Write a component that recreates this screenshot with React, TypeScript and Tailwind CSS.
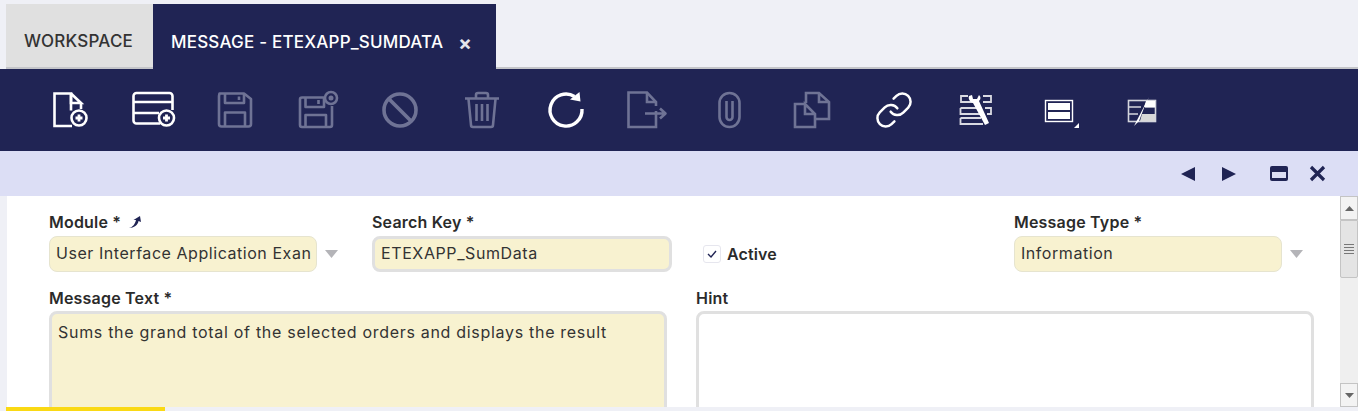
const white = "#ffffff";
const dim = "#6f7395";

function Svg({ children, color }: { children: React.ReactNode; color: string }) {
  return (
    <svg
      width="40"
      height="40"
      viewBox="0 0 40 40"
      fill="none"
      stroke={color}
      strokeWidth="2.6"
      strokeLinejoin="round"
      className="overflow-visible"
    >
      {children}
    </svg>
  );
}

function Plus({ cx, cy, r = 7.5 }: { cx: number; cy: number; r?: number }) {
  return (
    <>
      <circle cx={cx} cy={cy} r={r} />
      <path d={`M${cx - 3.5} ${cy}h7M${cx} ${cy - 3.5}v7`} strokeWidth="2.8" />
    </>
  );
}

const tools: { color: string; draw: React.ReactNode }[] = [
  {
    color: white,
    draw: (
      <>
        <path d="M21 20.5V3.5H4.5V36H22" strokeLinejoin="miter" />
        <path d="M21 3.5V13H31L21 3.5L31 13V19" strokeLinejoin="miter" />
        <Plus cx={29} cy={28} />
      </>
    ),
  },
  {
    color: white,
    draw: (
      <>
        <path d="M27 33.5H3.5a3 3 0 0 1-3-3V6a3 3 0 0 1 3-3h33a3 3 0 0 1 3 3v14" />
        <path d="M1 12H39M1 23H26" />
        <Plus cx={33.5} cy={28} />
      </>
    ),
  },
  {
    color: dim,
    draw: (
      <>
        <path d="M4.5 3.5H29L36 9V34a2.5 2.5 0 0 1-2.500 2.500H6.500a2.500 2.500 0 0 1-2.500-2.500V6z" />
        <path d="M10 3.500V13H29V3.500M24 6.500V10M10 36V22.500H30V36" />
      </>
    ),
  },
  {
    color: dim,
    draw: (
      <>
        <path d="M27 7.500H5a2 2 0 0 0-2 2V35a2 2 0 0 0 2 2H33a2 2 0 0 0 2-2V16" />
        <path d="M8.500 7.500V17H27V7.500M21.500 10V14M8.500 37V25H29V37" />
        <circle cx={34} cy={8} r={6} />
        <circle cx={34} cy={8} r={1.2} />
      </>
    ),
  },
  {
    color: dim,
    draw: (
      <>
        <circle cx={20} cy={20} r={16} strokeWidth="3.6" />
        <path d="M9 9L31 31" strokeWidth="3.8" />
      </>
    ),
  },
  {
    color: dim,
    draw: (
      <>
        <path d="M3 8.500H37M14 8V5a2 2 0 0 1 2-2h8a2 2 0 0 1 2 2v3" />
        <path d="M6.500 9L9 35a2 2 0 0 0 2 2H29a2 2 0 0 0 2-2L33.500 9" />
        <path d="M14.500 14V31M20 14V31M25.500 14V31" />
      </>
    ),
  },
  {
    color: white,
    draw: (
      <>
        <path d="M29.500 6.500A16 16 0 1 0 37 19" strokeWidth="3.4" />
        <path d="M25 9.500L35.500 11.500L34.500 2z" fill={white} stroke="none" />
      </>
    ),
  },
  {
    color: dim,
    draw: (
      <>
        <path d="M29 21V37H1.500V2.500H20L29 12V16" strokeLinejoin="miter" />
        <path d="M20 3V12H29" strokeLinejoin="miter" />
        <path d="M18 23.500H38M33 18.500L38.500 23.500L33 28.500" />
      </>
    ),
  },
  {
    color: dim,
    draw: (
      <>
        <rect x={10.500} y={3} width={20} height={34} rx={10} />
        <path d="M17.500 11V27a3 3 0 0 0 6 0V11" />
      </>
    ),
  },
  {
    color: dim,
    draw: (
      <>
        <path d="M13 14H3V37H23V24L13 14V24H23" strokeLinejoin="miter" />
        <path d="M14 13V3H27L37 12V29H23M27 3V12H37" strokeLinejoin="miter" />
      </>
    ),
  },
  {
    color: white,
    draw: (
      <g transform="scale(1.667)" strokeWidth="1.500" strokeLinecap="round">
        <path d="M10 13a5 5 0 0 0 7.540.540l3-3a5 5 0 0 0-7.070-7.070l-1.720 1.710" />
        <path d="M14 11a5 5 0 0 0-7.540-.540l-3 3a5 5 0 0 0 7.070 7.070l1.710-1.710" />
      </g>
    ),
  },
  {
    color: "#d9dae2",
    draw: (
      <>
        <path d="M12 6H5V12H17M27 6H35V12H27M4.500 18H22M4.500 18V24H24M29 18H35V24H31M4.500 28V34H27M4.500 28H25" strokeWidth="1.800" strokeLinejoin="miter" />
        <path d="M13 6C12 9 14 12 17 13L29 35L33 33L23 11C25 9 25 7 23 5L21 9L17 9L16 5z" fill={white} stroke="none" />
      </>
    ),
  },
  {
    color: white,
    draw: (
      <>
        <rect x={6.500} y={10.500} width={27} height={21} strokeWidth="1.400" strokeLinejoin="miter" />
        <rect x={9} y={13} width={22} height={7} fill={white} stroke="none" />
        <rect x={9} y={22} width={22} height={7} fill={white} stroke="none" />
        <path d="M35 38H40V33z" fill={white} stroke="none" />
      </>
    ),
  },
  {
    color: "#d4d5dd",
    draw: (
      <>
        <rect x={7.500} y={10.500} width={27} height={21} strokeWidth="1.600" strokeLinejoin="miter" />
        <path d="M7.500 17H20M7.500 24H17M24 17H34" strokeWidth="1.600" />
        <path d="M25 11H34V17H23z" fill={white} stroke="none" />
        <path d="M21 24H34V31H19z" fill="#d8d8d8" stroke="none" />
        <path d="M28 7L13 36L18 31L23 18z" fill={white} stroke="none" />
      </>
    ),
  },
];

function Caret() {
  return (
    <svg width="13" height="8" viewBox="0 0 13 8" className="shrink-0">
      <path d="M0 0H13L6.500 8z" fill="#b4b4b8" />
    </svg>
  );
}

function Label({ children }: { children: React.ReactNode }) {
  return <div className="text-[16px] leading-[18px] font-semibold tracking-[0.2px] text-[#2b2b2b]">{children}</div>;
}

function Pick({ children }: { children: React.ReactNode }) {
  return (
    <div className="flex items-center">
      <div className="h-9 w-[268px] overflow-hidden whitespace-nowrap rounded-lg border border-[#e6e4cf] bg-[#f8f2d0] px-[6px] text-[16px] leading-[32px] tracking-[0.55px] text-[#333333]">
        {children}
      </div>
      <div className="ml-[8px]">
        <Caret />
      </div>
    </div>
  );
}

function ScrollBtn({ down }: { down?: boolean }) {
  return (
    <div className="flex h-[24px] items-center justify-center border border-[#c4c4c4] bg-[#f3f3f3]">
      <svg width="9" height="5" viewBox="0 0 9 5">
        <path d={down ? "M0 0H9L4.500 5z" : "M0 5H9L4.500 0z"} fill="#666666" />
      </svg>
    </div>
  );
}

export default function App() {
  return (
    <div className="flex h-[411px] w-full flex-col overflow-hidden bg-[#eff0f6] font-['Inter','Liberation_Sans',sans-serif]">
      {/* Tabs */}
      <div className="flex h-[69px] shrink-0 items-stretch pl-[6px] pt-1">
        <div className="flex w-[147px] items-center border-b-2 border-[#c4c5c9] bg-[#e0e0e0] pl-[18px] pt-[12px] text-[17px] font-medium tracking-[0.2px] text-[#333333]">
          WORKSPACE
        </div>
        <div className="flex w-[343px] items-center bg-[#202454] pl-[18px] pt-[12px] text-[17px] font-medium tracking-[0.2px] text-white">
          MESSAGE - ETEXAPP_SUMDATA
          <span className="ml-[15px] text-[20px] font-bold leading-none text-[#e4e5ec]">×</span>
        </div>
        <div className="flex-1 border-b-2 border-[#c4c5c9]" />
      </div>

      {/* Toolbar */}
      <div className="flex h-[82px] shrink-0 items-center bg-[#202454] pl-[29px]">
        {tools.map((t, i) => (
          <div key={i} className="flex h-10 w-[82.4px] items-center justify-center">
            <Svg color={t.color}>{t.draw}</Svg>
          </div>
        ))}
      </div>

      {/* Status bar */}
      <div className="flex h-[45px] shrink-0 items-center justify-end bg-[#dcdef5] pr-[32px] text-[#202454]">
        <svg width="14" height="14" viewBox="0 0 14 14" fill="currentColor" className="mr-[27px]">
          <path d="M14 0V14L0 7z" />
        </svg>
        <svg width="14" height="14" viewBox="0 0 14 14" fill="currentColor" className="mr-[33px]">
          <path d="M0 0V14L14 7z" />
        </svg>
        <svg width="20" height="17" viewBox="0 0 20 17" className="mr-[20px]">
          <rect x="1" y="1" width="18" height="15" rx="2" fill="#202454" />
          <rect x="3" y="7" width="14" height="6" fill="#dcdef5" />
        </svg>
        <svg width="17" height="17" viewBox="0 0 17 17" fill="none" stroke="currentColor" strokeWidth="3.200">
          <path d="M2 2L15 15M15 2L2 15" />
        </svg>
      </div>

      {/* Form */}
      <div className="flex min-h-0 flex-1 pl-[7px]">
        <div className="min-w-0 flex-1 overflow-hidden bg-white pl-[42px] pt-[17px]">
          <div className="flex">
            <div className="w-[323px]">
              <div className="flex items-center gap-[7px]">
                <Label>Module *</Label>
                <svg width="14" height="14" viewBox="0 0 14 14">
                  <path d="M1 13C5 12 7 9 8 5L5.500 5L12 1L13 7L10.500 6C10 10 6 13 1 13z" fill="#202454" />
                </svg>
              </div>
              <div className="mt-[5px]">
                <Pick>User Interface Application Exan</Pick>
              </div>
            </div>
            <div className="w-[324px]">
              <Label>Search Key *</Label>
              <div className="mt-[5px] h-9 w-[300px] rounded-lg border-[3px] border-[#e0e0e0] bg-[#f8f2d0] px-[6px] text-[16px] leading-[29px] tracking-[0.6px] text-[#333333]">
                ETEXAPP_SumData
              </div>
            </div>
            <div className="w-[318px] pl-[7px] pt-[23px]">
              <div className="flex h-9 items-center gap-[6px]">
                <div className="flex h-[18px] w-[18px] items-center justify-center rounded-[3px] border border-[#e6e6ee] bg-white">
                  <svg width="10" height="8" viewBox="0 0 10 8" fill="none" stroke="#202454" strokeWidth="1.400">
                    <path d="M1 4L4 7L9 1" />
                  </svg>
                </div>
                <span className="text-[16px] font-semibold tracking-[0.1px] text-[#2b2b2b]">Active</span>
              </div>
            </div>
            <div>
              <Label>Message Type *</Label>
              <div className="mt-[5px]">
                <Pick>Information</Pick>
              </div>
            </div>
          </div>

          <div className="mt-[17px] flex">
            <div className="w-[647px]">
              <Label>Message Text *</Label>
              <div className="mt-[4px] h-[120px] w-[618px] rounded-lg border-[3px] border-[#e0e0e0] bg-[#f8f2d0] px-[6px] pt-[9px] text-[16px] leading-[18px] tracking-[0.7px] text-[#333333]">
                Sums the grand total of the selected orders and displays the result
              </div>
            </div>
            <div>
              <Label>Hint</Label>
              <div className="mt-[4px] h-[120px] w-[618px] rounded-lg border-[3px] border-[#e0e0e0] bg-white" />
            </div>
          </div>
        </div>

        {/* Scrollbar */}
        <div className="flex w-[18px] shrink-0 flex-col bg-[#efefef]">
          <ScrollBtn />
          <div className="flex h-[58px] flex-col items-center justify-center gap-[2px] rounded-b-[2px] border border-[#c4c4c4] bg-[#e4e4e4]">
            <div className="h-px w-[10px] bg-[#777777]" />
            <div className="h-px w-[10px] bg-[#777777]" />
            <div className="h-px w-[10px] bg-[#777777]" />
            <div className="h-px w-[10px] bg-[#777777]" />
          </div>
          <div className="flex-1" />
          <ScrollBtn down />
        </div>
      </div>

      {/* Progress */}
      <div className="h-1 shrink-0 pl-[6px]">
        <div className="h-full w-[159px] bg-[#fad914]" />
      </div>
    </div>
  );
}
